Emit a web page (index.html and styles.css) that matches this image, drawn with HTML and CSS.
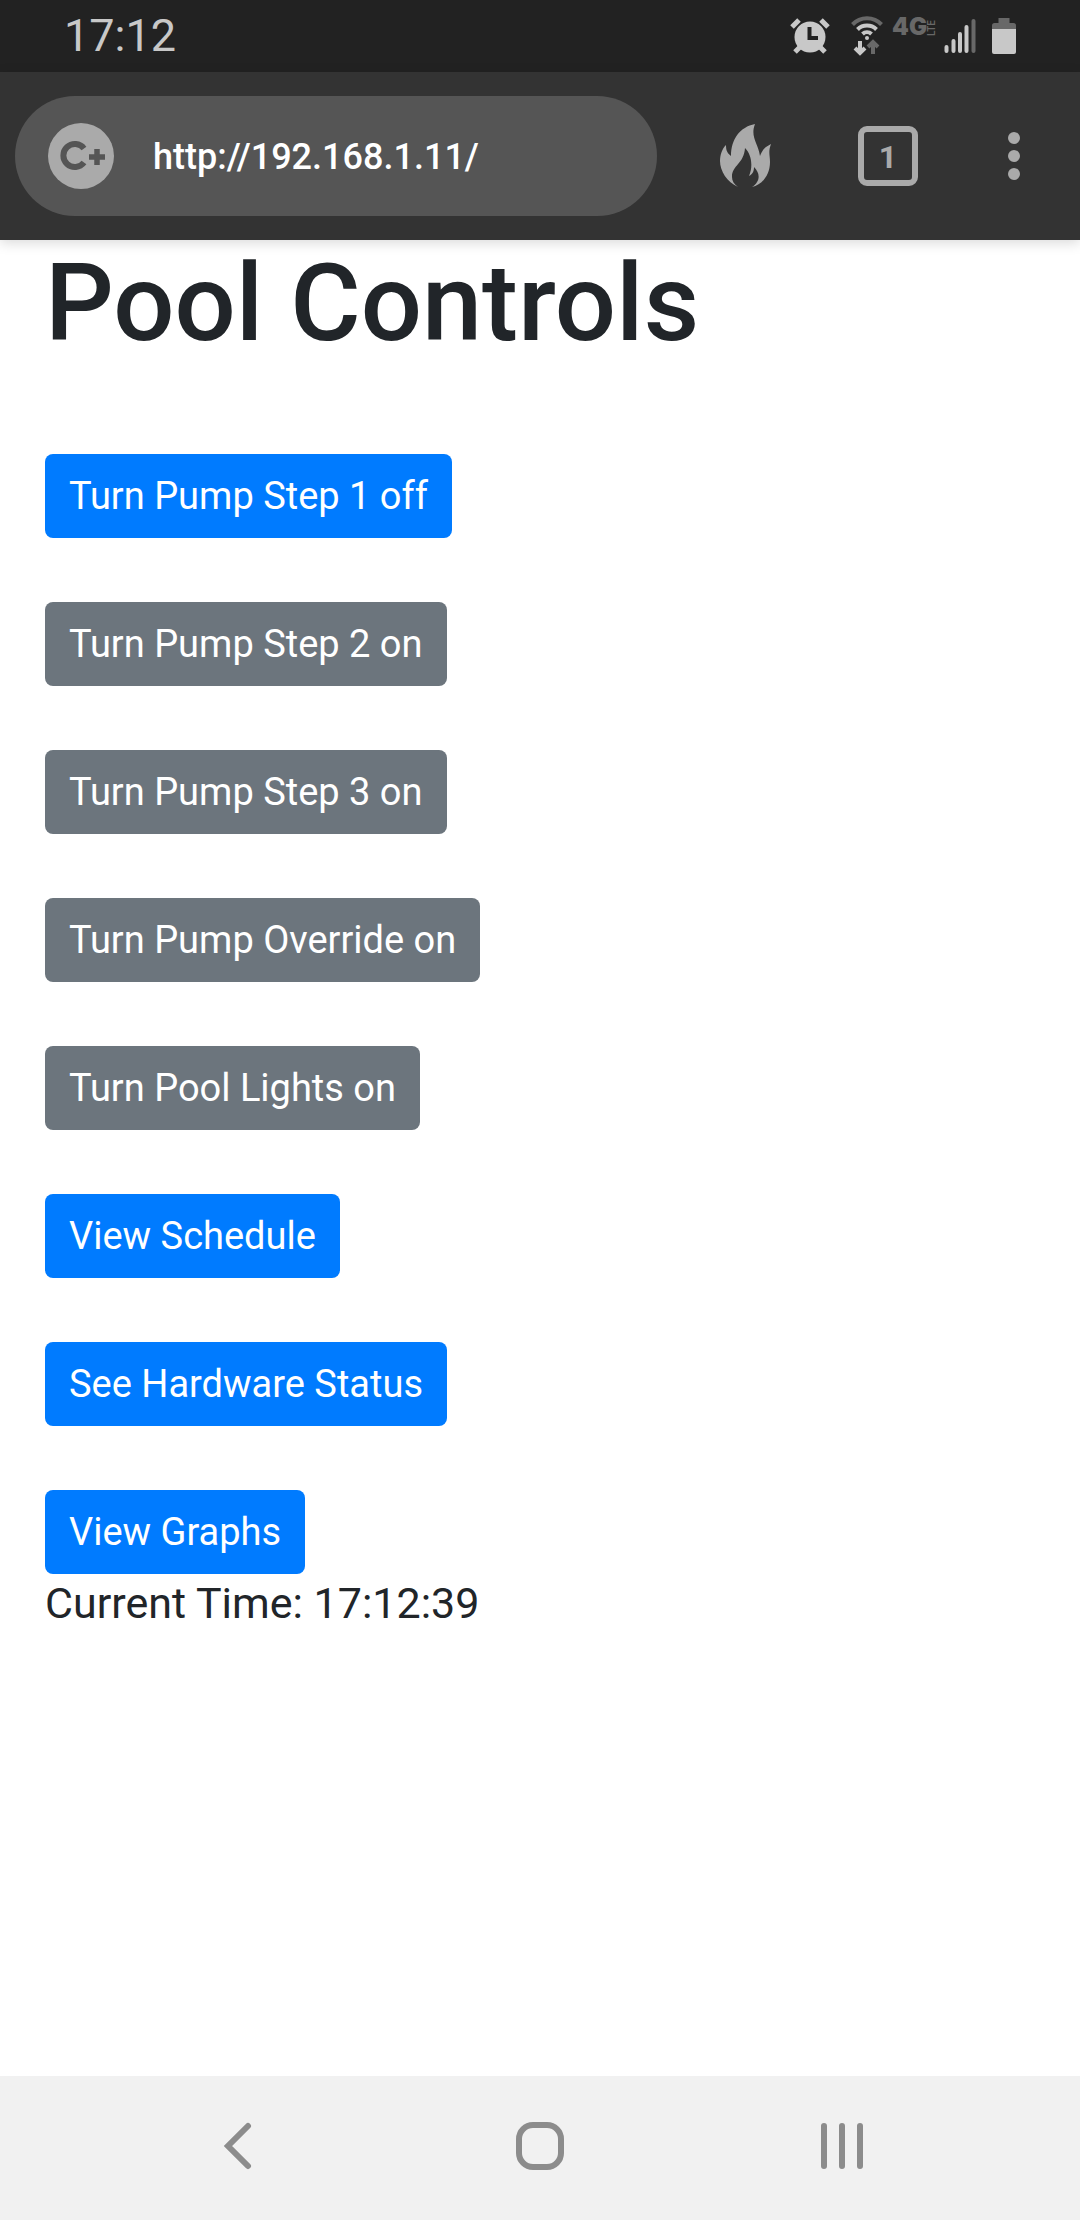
FILE: index.html
```html
<!DOCTYPE html>
<html lang="en">
<head>
<meta charset="utf-8">
<meta name="viewport" content="width=device-width, initial-scale=1">
<title>Pool Controls</title>
<link rel="stylesheet" href="styles.css">
</head>
<body>
<header class="status-bar">
  <time class="clock">17:12</time>
  <div class="status-icons">
    <svg class="icon" width="40" height="40" viewBox="791 15 40 40" aria-label="Alarm">
      <g stroke="#c8c8c8" stroke-width="5">
        <path d="M793 26l7-7M829 26l-7-7"/>
        <path d="M801 46l-5 5M821 46l5 5"/>
      </g>
      <circle cx="811" cy="36" r="15.500" fill="#c8c8c8"/>
      <path d="M810.500 26v11h8.500" fill="none" stroke="#222" stroke-width="4"/>
    </svg>
    <svg class="icon" width="34" height="42" viewBox="850 14 34 42" aria-label="Wi-Fi">
      <g fill="none" stroke-width="4">
        <path d="M852.500 23.500a20 20 0 0 1 29 0" stroke="#686868"/>
        <path d="M857.500 28.500a13.500 13.500 0 0 1 19 0M862.500 33a6.500 6.500 0 0 1 9 0" stroke="#c8c8c8"/>
        <path d="M860 40v12M855 47l5 5 5-5" stroke="#c8c8c8"/>
        <path d="M873 53v-12M868 46l5-5 5 5" stroke="#686868"/>
      </g>
      <circle cx="867" cy="37" r="2" fill="#c8c8c8"/>
    </svg>
    <div class="network"><span class="network-gen">4G</span><span class="network-lte">LTE</span></div>
    <svg class="icon" width="32" height="36" viewBox="945 18 32 36" aria-label="Signal">
      <g stroke-width="4" stroke-linecap="round" stroke="#c8c8c8">
        <path d="M947.500 47v4M954.500 41v10M961 34v17M967.500 27v24"/>
        <path d="M974.500 21v30" stroke="#686868"/>
      </g>
    </svg>
    <svg class="icon" width="24" height="36" viewBox="992 17 24 36" aria-label="Battery">
      <path d="M998.500 22v-5h11v5h4q2.500 0 2.500 2.500V29h-24v-4.500q0-2.500 2.500-2.500z" fill="#686868"/>
      <path d="M992 28h24v23q0 2-2 2h-20q-2 0-2-2z" fill="#c8c8c8"/>
    </svg>
  </div>
</header>
<nav class="toolbar">
  <label class="address">
    <svg width="66" height="66" viewBox="0 0 66 66" aria-label="Site">
      <circle cx="33" cy="33" r="33" fill="#aaa"/>
      <path d="M36 25.500a11.500 11.500 0 1 0 0 14" fill="none" stroke="#555" stroke-width="6"/>
      <path d="M41 34h16M49 26v16" stroke="#555" stroke-width="5.500"/>
    </svg>
    <input class="url" type="text" value="http://192.168.1.11/" aria-label="Address">
  </label>
  <button class="tool" type="button" aria-label="Clear data">
    <svg width="54" height="66" viewBox="717 123 54 66">
      <path fill="#aaa" d="M755 124c-5 13 3 19 5 32 2-6 5-9 11-12-3 8-1 11-1 18 0 13-8 23-18 25 9-6 8-14 2-20 0 4-1 7-5 9 4-9 3-21-4-28-1 16-13 17-13 29 0 4 2 7 6 10-11-5-18-16-18-26 0-6 2-12 6-16 0 5 1 8 5 11 0-17 9-29 24-32z"/>
    </svg>
  </button>
  <button class="tool" type="button" aria-label="Tabs"><span class="tab-count">1</span></button>
  <button class="tool tool-menu" type="button" aria-label="Menu">
    <svg width="12" height="48" viewBox="0 0 12 48" fill="#aaa">
      <circle cx="6" cy="6" r="6"/><circle cx="6" cy="24" r="6"/><circle cx="6" cy="42" r="6"/>
    </svg>
  </button>
</nav>
<main class="page">
  <h1 class="title">Pool Controls</h1>
  <div class="controls">
    <button class="btn btn-primary" type="button">Turn Pump Step 1 off</button>
    <button class="btn" type="button">Turn Pump Step 2 on</button>
    <button class="btn" type="button">Turn Pump Step 3 on</button>
    <button class="btn" type="button">Turn Pump Override on</button>
    <button class="btn" type="button">Turn Pool Lights on</button>
    <a class="btn btn-primary" href="#schedule">View Schedule</a>
    <a class="btn btn-primary" href="#hardware">See Hardware Status</a>
    <a class="btn btn-primary" href="#graphs">View Graphs</a>
  </div>
  <p class="current-time">Current Time: 17:12:39</p>
</main>
<footer class="nav-bar">
  <button class="nav-button" type="button" aria-label="Back">
    <svg width="48" height="48" viewBox="0 0 48 48"><path d="M34 4L14 24l20 20" fill="none" stroke="#8c8c8c" stroke-width="6" stroke-linecap="round"/></svg>
  </button>
  <button class="nav-button" type="button" aria-label="Home">
    <svg width="48" height="48" viewBox="0 0 48 48"><rect x="3" y="3" width="42" height="42" rx="14" fill="none" stroke="#8c8c8c" stroke-width="6"/></svg>
  </button>
  <button class="nav-button" type="button" aria-label="Recent apps">
    <svg width="48" height="48" viewBox="0 0 48 48"><path d="M6 4v40M24 4v40M42 4v40" stroke="#8c8c8c" stroke-width="6" stroke-linecap="round"/></svg>
  </button>
</footer>
</body>
</html>
```
FILE: styles.css
```css
* {
  box-sizing: border-box;
}

body {
  display: flex;
  flex-direction: column;
  min-height: 100vh;
  margin: 0;
  background: #fff;
  color: #212529;
  font-family: Roboto, "Liberation Sans", sans-serif;
}

button {
  margin: 0;
  border: 0;
  font-family: inherit;
}

svg {
  display: block;
}

.status-bar {
  display: flex;
  align-items: center;
  justify-content: space-between;
  height: 72px;
  padding: 0 64px;
  background: #222;
  color: #c8c8c8;
}

.clock {
  font-size: 45px;
  line-height: 72px;
}

.status-icons {
  display: flex;
  align-items: center;
  gap: 8px;
}

.status-icons .icon:first-child {
  margin-right: 12px;
}

.status-icons .icon:last-child {
  margin-left: 8px;
}

.network {
  display: flex;
  align-self: flex-start;
  height: 18px;
  margin-top: 3px;
  color: #686868;
}

.network-gen {
  font: 900 24px/18px Inter, sans-serif;
}

.network-lte {
  font: 500 10px/9px Roboto, sans-serif;
  writing-mode: vertical-rl;
  transform: rotate(180deg);
}

.toolbar {
  display: flex;
  align-items: center;
  height: 168px;
  padding: 0 12px 0 15px;
  background: #333;
  box-shadow: 0 3px 12px rgba(0, 0, 0, 0.15);
}

.address {
  display: flex;
  flex: 1;
  align-items: center;
  gap: 39px;
  height: 120px;
  margin-right: 15px;
  padding: 0 33px;
  border-radius: 60px;
  background: #555;
}

.url {
  flex: 1;
  min-width: 0;
  padding: 2px 0 0;
  border: 0;
  background: none;
  color: #fff;
  font: 500 36px/48px Roboto, "Liberation Sans", sans-serif;
}

.tool {
  display: flex;
  align-items: center;
  justify-content: center;
  width: 144px;
  height: 120px;
  padding: 0;
  background: none;
}

.tool-menu {
  width: 108px;
}

.tab-count {
  width: 60px;
  height: 60px;
  border: 6px solid #aaa;
  border-radius: 9px;
  color: #aaa;
  font-size: 32px;
  font-weight: 700;
  line-height: 50px;
}

.page {
  flex: 1;
  padding: 0 45px;
}

.title {
  margin: 0 0 88px;
  font-size: 108px;
  font-weight: 500;
  line-height: 126px;
}

.controls {
  display: flex;
  flex-direction: column;
  align-items: flex-start;
  gap: 64px;
}

.btn {
  padding: 14px 24px;
  border-radius: 8px;
  background: #6c757d;
  color: #fff;
  font-size: 38px;
  line-height: 56px;
  text-decoration: none;
}

.btn-primary {
  background: #007bff;
}

.current-time {
  margin: 0;
  font-size: 43px;
  line-height: 58px;
}

.nav-bar {
  display: grid;
  grid-template-columns: repeat(3, 28%);
  justify-content: center;
  height: 144px;
  padding-bottom: 4px;
  background: #f1f1f1;
}

.nav-button {
  display: flex;
  align-items: center;
  justify-content: center;
  padding: 0;
  background: none;
}
```
